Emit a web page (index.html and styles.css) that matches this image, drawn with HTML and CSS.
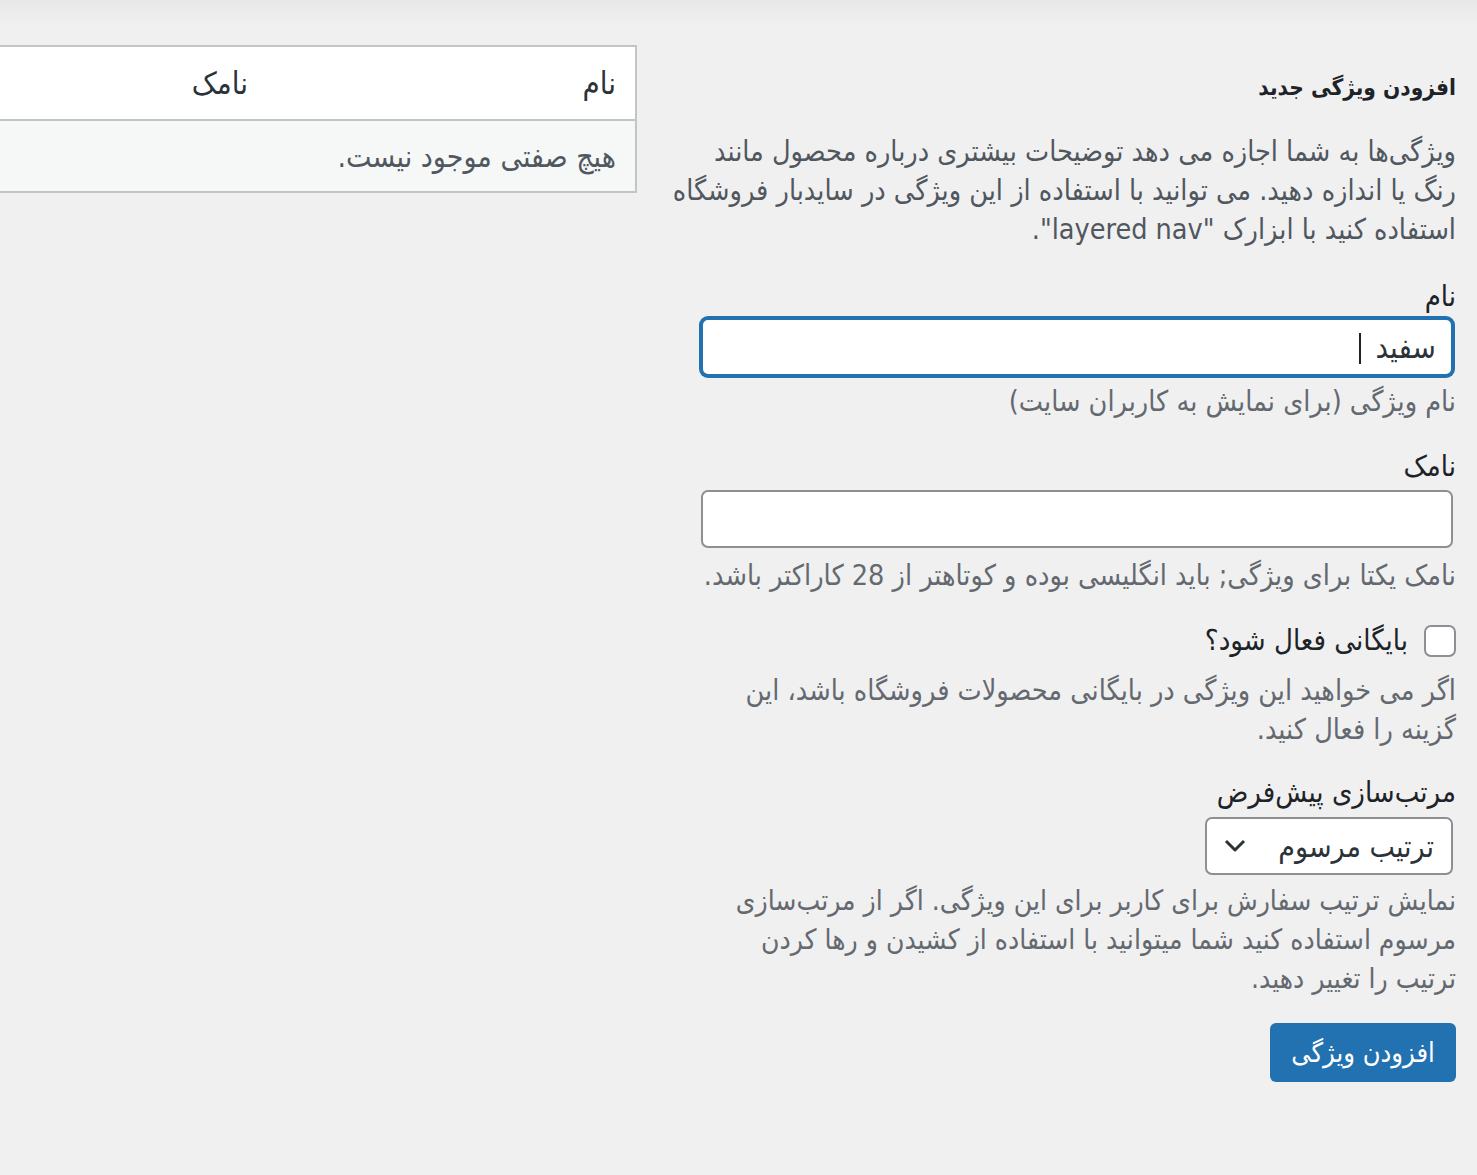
FILE: index.html
```html
<!DOCTYPE html>
<html lang="fa" dir="rtl">
<head>
  <meta charset="UTF-8" />
  <meta name="viewport" content="width=device-width, initial-scale=1.0" />
  <title>ویژگی‌ها</title>
  <link rel="stylesheet" href="styles.css">
</head>
<body>
  <div class="wrap">
    <div class="col-form">
      <h2 class="title">افزودن ویژگی جدید</h2>
      <p class="intro">ویژگی‌ها به شما اجازه می دهد توضیحات بیشتری درباره محصول مانند<br>رنگ یا اندازه دهید. می توانید با استفاده از این ویژگی در سایدبار فروشگاه<br>استفاده کنید با ابزارک "layered nav".</p>

      <form class="form" id="form">
        <div class="field field-first">
          <label for="attr-name">نام</label>
          <div class="input-wrap">
            <input type="text" id="attr-name" class="text-input is-focused" value="سفید" />
            <span class="caret"></span>
          </div>
          <p class="help">نام ویژگی (برای نمایش به کاربران سایت)</p>
        </div>

        <div class="field">
          <label for="attr-slug">نامک</label>
          <input type="text" id="attr-slug" class="text-input" />
          <p class="help help-slug">نامک یکتا برای ویژگی; باید انگلیسی بوده و کوتاهتر از 28 کاراکتر باشد.</p>
        </div>

        <div class="field">
          <label class="check-row">
            <span class="checkbox"></span>
            <span>بایگانی فعال شود؟</span>
          </label>
          <p class="help help-check">اگر می خواهید این ویژگی در بایگانی محصولات فروشگاه باشد، این<br>گزینه را فعال کنید.</p>
        </div>

        <div class="field field-sort">
          <label for="attr-order">مرتب‌سازی پیش‌فرض</label>
          <div class="select">
            <span class="select-value">ترتیب مرسوم</span>
            <svg class="chevron" width="22" height="14" viewBox="0 0 22 14"><polyline points="2,2 11,11 20,2" fill="none" stroke="#2c3338" stroke-width="3" stroke-linejoin="round"/></svg>
          </div>
          <p class="help help-sort">نمایش ترتیب سفارش برای کاربر برای این ویژگی. اگر از مرتب‌سازی<br>مرسوم استفاده کنید شما میتوانید با استفاده از کشیدن و رها کردن<br>ترتیب را تغییر دهید.</p>
        </div>

        <button type="submit" class="button-primary">افزودن ویژگی</button>
      </form>
    </div>

    <div class="col-table">
      <table class="attr-table">
        <thead>
          <tr>
            <th class="col-name">نام</th>
            <th>نامک</th>
          </tr>
        </thead>
        <tbody>
          <tr>
            <td colspan="2">هیچ صفتی موجود نیست.</td>
          </tr>
        </tbody>
      </table>
    </div>
  </div>
</body>
</html>
```

FILE: styles.css
```css
html, body {
  margin: 0;
  padding: 0;
}
body {
  direction: rtl;
  font-family: "DejaVu Sans Condensed", "DejaVu Sans", sans-serif;
  font-size: 28.5px;
  color: #1d2327;
  background: linear-gradient(#e8e8e8, #f0f0f1 26px) #f0f0f1;
  min-height: 100vh;
  overflow: hidden;
}
.wrap {
  display: flex;
  gap: 27px;
  margin-left: -60px;
  padding-right: 21px;
}
.col-form {
  flex: 0 0 792px;
}
.col-table {
  flex: 1;
  margin-top: 45px;
}

.title {
  margin: 72px 0 0;
  font-size: 22.5px;
  line-height: 30px;
  font-weight: bold;
}
.intro {
  margin: 30px 0 0;
  line-height: 39px;
  color: #50575e;
  white-space: nowrap;
}

.field {
  margin-top: 26px;
}
.field-first {
  margin-top: 28px;
}
.field-sort {
  margin-top: 24px;
}
.field label {
  display: block;
  line-height: 39px;
  font-size: 29px;
}
.help {
  margin: 6px 0 0;
  line-height: 39px;
  color: #646970;
  white-space: nowrap;
}
.help-slug {
  margin-top: 8px;
}
.help-check {
  margin-top: 11px;
}
.help-sort {
  font-size: 28px;
}

.input-wrap {
  position: relative;
}
.text-input {
  display: block;
  box-sizing: border-box;
  width: 752px;
  height: 58px;
  margin: 4px 3px 0 0;
  padding: 0 15px;
  border: 2px solid #8c8f94;
  border-radius: 7px;
  background: #fff;
  font-family: inherit;
  font-size: 31px;
  color: #2c3338;
  outline: none;
}
.text-input.is-focused {
  margin-top: 2px;
  border-color: #2271b1;
  box-shadow: 0 0 0 2px #2271b1;
}
.caret {
  position: absolute;
  top: 15px;
  right: 95px;
  width: 2px;
  height: 31px;
  background: #1d2327;
}

.check-row {
  display: flex !important;
  align-items: center;
  gap: 16px;
}
.checkbox {
  box-sizing: border-box;
  width: 32px;
  height: 32px;
  border: 2px solid #8c8f94;
  border-radius: 7px;
  background: #fff;
}

.select {
  box-sizing: border-box;
  display: flex;
  align-items: center;
  justify-content: space-between;
  width: 248px;
  height: 58px;
  margin: 5px 3px 0 0;
  padding: 0 17px 0 17px;
  border: 2px solid #8c8f94;
  border-radius: 7px;
  background: #fff;
  color: #2c3338;
  font-size: 30px;
}
.chevron {
  display: block;
}

.button-primary {
  margin-top: 25px;
  width: 186px;
  height: 59px;
  border: none;
  border-radius: 6px;
  background-color: #2271b1;
  color: #fff;
  font-family: inherit;
  font-size: 27px;
  cursor: pointer;
}

.attr-table {
  width: 100%;
  border-collapse: collapse;
  border: 2px solid #c3c4c7;
}
.attr-table th {
  height: 72px;
  padding: 0 19px;
  text-align: right;
  font-weight: normal;
  font-size: 31px;
  color: #2c3338;
  background: #fff;
  border-bottom: 2px solid #c3c4c7;
}
.attr-table .col-name {
  width: 330px;
}
.attr-table td {
  height: 70px;
  padding: 0 19px;
  font-size: 30px;
  background: #f6f7f7;
  color: #50575e;
}
```
